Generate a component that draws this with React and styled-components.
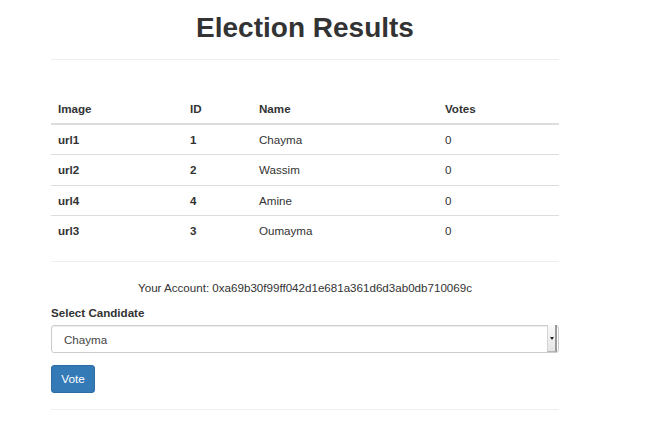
import React from "react";
import styled, { createGlobalStyle } from "styled-components";

const GlobalStyle = createGlobalStyle`
  body {
    margin: 0;
    background: #fff;
    font-family: "Liberation Sans", Arial, sans-serif;
    font-size: 11.6px;
    line-height: 16.5px;
    color: #333;
  }
`;

const Container = styled.div`
  width: 508px;
  margin-left: 51px;
  padding-top: 13px;
`;

const Title = styled.h1`
  margin: 0;
  font-size: 28px;
  line-height: 30px;
  font-weight: bold;
  text-align: center;
  color: #333;
`;

const Rule = styled.hr`
  margin: ${(p) => p.$top}px 0 0;
  border: 0;
  border-top: 1px solid #eee;
  height: 0;
`;

const Table = styled.table`
  width: 100%;
  margin-top: 33px;
  border-collapse: collapse;
  border-spacing: 0;
  table-layout: fixed;
`;

const Th = styled.th`
  text-align: left;
  font-weight: bold;
  padding: 8px 7px 5.5px;
  border-bottom: 2px solid #ddd;
`;

const Td = styled.td`
  padding: 7px 7px 6px;
  border-top: ${(p) => (p.$first ? "0" : "1px solid #ddd")};
  font-weight: ${(p) => (p.$bold ? "bold" : "normal")};
`;

const Account = styled.p`
  margin: 18.5px 0 0;
  text-align: center;
`;

const Label = styled.label`
  display: block;
  margin-top: 8px;
  font-weight: bold;
`;

const SelectWrap = styled.div`
  position: relative;
  margin-top: 4px;
  height: 28px;
`;

const Select = styled.select`
  appearance: none;
  -webkit-appearance: none;
  width: 100%;
  height: 28px;
  box-sizing: border-box;
  padding: 0 0 0 12px;
  font-family: inherit;
  font-size: 11.6px;
  color: #444;
  background: #fff;
  border: 1px solid #ccc;
  border-radius: 3px;
  box-shadow: inset 0 1px 1px rgba(0, 0, 0, 0.075);
  outline: none;
`;

const Arrow = styled.div`
  position: absolute;
  top: 0;
  right: 2px;
  width: 10px;
  height: 27px;
  box-sizing: border-box;
  background: linear-gradient(#fafafa, #e4e4e4);
  border-left: 1px solid #d4d4d4;
  border-right: 2px solid #9a9a9a;
  border-bottom: 1px solid #b5b5b5;
  display: flex;
  align-items: center;
  justify-content: center;

  &::after {
    content: "";
    border-left: 2.5px solid transparent;
    border-right: 2.5px solid transparent;
    border-top: 3px solid #222;
  }
`;

const Button = styled.button`
  display: block;
  margin-top: 12px;
  width: 44px;
  height: 28px;
  padding: 0;
  font-family: inherit;
  font-size: 11.8px;
  color: #fff;
  background: #337ab7;
  border: 1px solid #2e6da4;
  border-radius: 3px;
`;

const candidates = [
  { image: "url1", id: 1, name: "Chayma", votes: 0 },
  { image: "url2", id: 2, name: "Wassim", votes: 0 },
  { image: "url4", id: 4, name: "Amine", votes: 0 },
  { image: "url3", id: 3, name: "Oumayma", votes: 0 },
];

const App = () => {
  return (
    <>
      <GlobalStyle />
      <Container>
        <Title>Election Results</Title>
        <Rule $top={15.5} />
        <Table>
          <colgroup>
            <col style={{ width: 132 }} />
            <col style={{ width: 69 }} />
            <col style={{ width: 186 }} />
            <col style={{ width: 121 }} />
          </colgroup>
          <thead>
            <tr>
              <Th>Image</Th>
              <Th>ID</Th>
              <Th>Name</Th>
              <Th>Votes</Th>
            </tr>
          </thead>
          <tbody>
            {candidates.map((c, i) => (
              <tr key={c.id}>
                <Td $first={i === 0} $bold>{c.image}</Td>
                <Td $first={i === 0} $bold>{c.id}</Td>
                <Td $first={i === 0}>{c.name}</Td>
                <Td $first={i === 0}>{c.votes}</Td>
              </tr>
            ))}
          </tbody>
        </Table>
        <Rule $top={15} />
        <Account>Your Account: 0xa69b30f99ff042d1e681a361d6d3ab0db710069c</Account>
        <Label>Select Candidate</Label>
        <SelectWrap>
          <Select defaultValue="1">
            {candidates.map((c) => (
              <option key={c.id} value={c.id}>
                {c.name}
              </option>
            ))}
          </Select>
          <Arrow />
        </SelectWrap>
        <Button>Vote</Button>
        <Rule $top={16} />
      </Container>
    </>
  );
};

export default App;
